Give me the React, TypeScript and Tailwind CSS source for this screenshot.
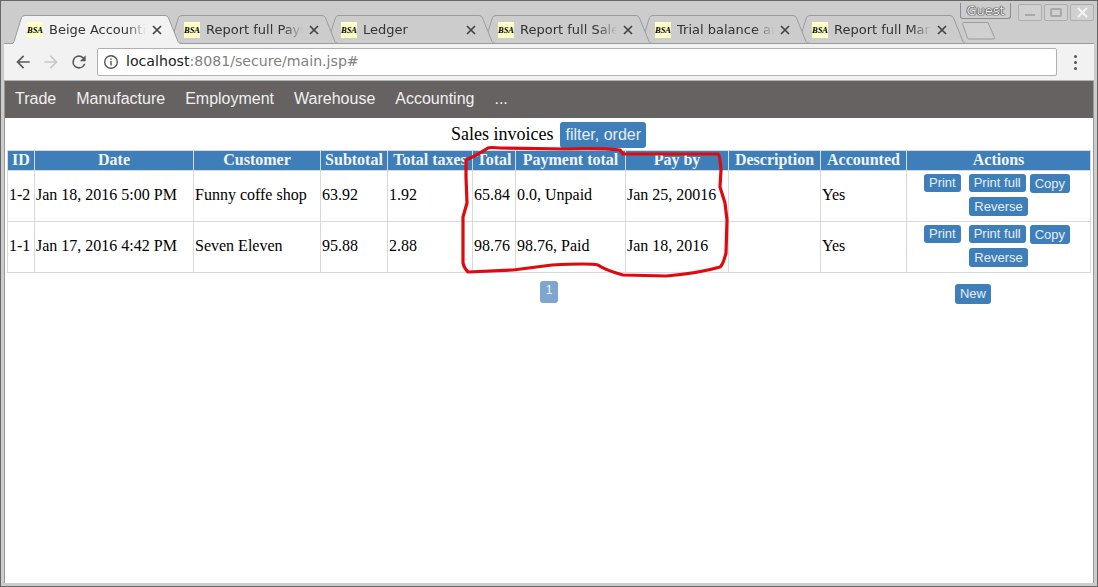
import * as React from "react";

const tabs = [
  { title: "Beige Accounting System", active: true },
  { title: "Report full Payment" },
  { title: "Ledger" },
  { title: "Report full Sales" },
  { title: "Trial balance and" },
  { title: "Report full Manuf" },
];

const columns = [
  { name: "ID", width: 27 },
  { name: "Date", width: 159 },
  { name: "Customer", width: 127 },
  { name: "Subtotal", width: 67 },
  { name: "Total taxes", width: 85 },
  { name: "Total", width: 43 },
  { name: "Payment total", width: 110 },
  { name: "Pay by", width: 103 },
  { name: "Description", width: 92 },
  { name: "Accounted", width: 86 },
  { name: "Actions", width: 184 },
];

const invoices = [
  ["1-2", "Jan 18, 2016 5:00 PM", "Funny coffe shop", "63.92", "1.92", "65.84", "0.0, Unpaid", "Jan 25, 20016", "", "Yes"],
  ["1-1", "Jan 17, 2016 4:42 PM", "Seven Eleven", "95.88", "2.88", "98.76", "98.76, Paid", "Jan 18, 2016", "", "Yes"],
];

function Favicon() {
  return (
    <span className="flex h-4 w-4 shrink-0 items-center justify-center bg-[#ffffc8] font-['Liberation_Serif',serif] text-[8.5px] font-bold italic leading-none text-black">
      BSA
    </span>
  );
}

function Tab({ title, active, index }: { title: string; active?: boolean; index: number }) {
  return (
    <div className="relative -mr-[15px] h-[29px] w-[172px] shrink-0" style={{ zIndex: active ? 20 : 10 - index }}>
      <svg className="absolute left-0 top-0" width="172" height="30" viewBox="0 0 172 30">
        <path
          d={"M0 28.5 H2 Q3.5 28.5 4 26.5 L11.5 2.5 Q12.2 0.5 15 0.5 L155 0.5 Q157.5 0.5 158.5 3 L168 26.5 Q169 28.5 172 28.5" + (active ? "" : " Z")}
          fill={active ? "#f2f2f2" : "#cccccc"}
          stroke="#9c9c9c"
        />
        {active && <rect x="3" y="28" width="166" height="2" fill="#f2f2f2" />}
      </svg>
      <div className="relative flex h-[28px] items-center pl-[17px] pt-[2px] font-['DejaVu_Sans',sans-serif] text-[13px] text-[#333]">
        <Favicon />
        <span className="ml-[6px] w-[97px] overflow-hidden whitespace-nowrap [mask-image:linear-gradient(to_right,black_80%,transparent)]">
          {title}
        </span>
        <svg className="ml-[6px]" width="10" height="10" viewBox="0 0 10 10" stroke="#444" strokeWidth="1.7">
          <path d="M1 1 L9 9 M9 1 L1 9" />
        </svg>
      </div>
    </div>
  );
}

function ActionButton({ label, className = "" }: { label: string; className?: string }) {
  return (
    <span className={`inline-block rounded-[3px] bg-[#3e7eb9] text-[13px] leading-[15px] text-[#e8eef5] ${className}`}>
      {label}
    </span>
  );
}

function WindowButton({ children }: { children: React.ReactNode }) {
  return (
    <div className="flex h-[17px] w-[24px] items-center justify-center rounded-[2px] border border-[#adadad] bg-[#d0d0d0]">
      {children}
    </div>
  );
}

export default function App() {
  return (
    <div className="relative flex h-[587px] w-[1098px] flex-col overflow-hidden border border-[#666] bg-[#cccccc] px-[3px] pb-[3px]">
      {/* tab strip */}
      <div className="relative z-10 -mx-[3px] flex h-[43px] items-start">
        <div className="flex pl-[9px] pt-[14px]">
          {tabs.map((t, i) => (
            <Tab key={t.title} title={t.title} active={t.active} index={i} />
          ))}
        </div>
        <svg className="-mr-[43px] ml-[10px] mt-[21px] shrink-0" width="33" height="18" viewBox="0 0 33 18" fill="none" stroke="#9c9c9c">
          <path d="M0.5 1.5 Q0.5 0.5 2 0.5 L26 0.5 L32.5 15.5 Q33 17 31 17 L7 17 Q6 17 5.5 16 Z" fill="#d0d0d0" />
        </svg>
        <div className="ml-auto flex items-start pr-[3px]">
          <div className="mr-[7px] mt-[2px] flex h-[16px] w-[51px] items-center justify-center rounded-b-[3px] border border-t-0 border-[#8c8c8c] font-['DejaVu_Sans',sans-serif] text-[13px] text-[#f0f0f0] [text-shadow:0_0_1px_#222,0_0_1px_#222,0_0_1px_#222]">
            Guest
          </div>
          <div className="mt-[3px] flex gap-[2px]">
            <WindowButton>
              <span className="mt-[5px] h-[2px] w-[10px] bg-[#a8a8a8]" />
            </WindowButton>
            <WindowButton>
              <span className="h-[9px] w-[12px] rounded-[2px] border-2 border-[#a8a8a8]" />
            </WindowButton>
            <WindowButton>
              <svg width="11" height="11" viewBox="0 0 11 11" stroke="#f4f4f4" strokeWidth="2">
                <path d="M1 1 L10 10 M10 1 L1 10" />
              </svg>
            </WindowButton>
          </div>
        </div>
      </div>

      {/* toolbar */}
      <div className="-mt-[1px] flex h-[38px] items-center border-b border-t border-b-[#b5b5b5] border-t-[#9c9c9c] bg-[#f2f2f2] pl-[9px] pr-[17px]">
        <svg width="20" height="20" viewBox="0 0 24 24" fill="#5a5a5a">
          <path d="M20 11H7.83l5.59-5.59L12 4l-8 8 8 8 1.41-1.41L7.83 13H20v-2z" />
        </svg>
        <svg className="ml-[8px]" width="20" height="20" viewBox="0 0 24 24" fill="#c8c8c8">
          <path d="M4 11h12.17l-5.59-5.59L12 4l8 8-8 8-1.41-1.41L16.17 13H4v-2z" />
        </svg>
        <svg className="ml-[8px]" width="20" height="20" viewBox="0 0 24 24" fill="#5a5a5a">
          <path d="M17.65 6.35A7.96 7.96 0 0 0 12 4a8 8 0 1 0 7.73 10h-2.08A6 6 0 1 1 12 6c1.66 0 3.14.69 4.22 1.78L13 11h7V4l-2.35 2.35z" />
        </svg>
        <div className="ml-[8px] flex h-[28px] flex-1 items-center rounded-[2px] border border-[#b0b0b0] bg-white pl-[5px] font-['DejaVu_Sans',sans-serif] text-[14.15px]">
          <svg width="16" height="16" viewBox="0 0 16 16" fill="none" stroke="#555" strokeWidth="1.4">
            <circle cx="8" cy="8" r="6.3" />
            <path d="M8 7 V11.5 M8 4.2 V5.8" />
          </svg>
          <span className="ml-[7px] text-[#222]">localhost</span>
          <span className="text-[#808080]">:8081/secure/main.jsp#</span>
        </div>
        <div className="ml-[17px] flex flex-col gap-[3px]">
          <span className="h-[3px] w-[3px] rounded-full bg-[#555]" />
          <span className="h-[3px] w-[3px] rounded-full bg-[#555]" />
          <span className="h-[3px] w-[3px] rounded-full bg-[#555]" />
        </div>
      </div>

      {/* page */}
      <div className="flex flex-1 flex-col border-x border-[#999] bg-white font-['Liberation_Serif',serif] text-[16px] text-black">
        <div className="flex h-[37px] items-center gap-[20px] bg-[#666261] pb-[2px] pl-[10px] font-['Liberation_Sans',sans-serif] text-[16px] text-[#f0f0f0]">
          {["Trade", "Manufacture", "Employment", "Warehouse", "Accounting", "..."].map((m) => (
            <span key={m}>{m}</span>
          ))}
        </div>

        <div className="flex h-[32px] items-center justify-center pr-[1px] pt-[2px]">
          <span className="mb-[2px] text-[18px]">Sales invoices</span>
          <span className="ml-[7px] rounded-[3px] bg-[#3e7eb9] px-[5px] py-[5px] font-['Liberation_Sans',sans-serif] text-[16px] leading-[16px] text-[#e8eef5]">
            filter, order
          </span>
        </div>

        <table className="ml-[2px] w-[1083px] table-fixed border-collapse">
          <colgroup>
            {columns.map((c) => (
              <col key={c.name} style={{ width: c.width }} />
            ))}
          </colgroup>
          <thead>
            <tr>
              {columns.map((c) => (
                <th key={c.name} className="h-[19px] whitespace-nowrap border border-[#d9d9d9] bg-[#3e7eb9] p-0 pb-[2px] text-center align-middle text-[16px] font-bold leading-[17px] text-[#f2f5f9]">
                  {c.name}
                </th>
              ))}
            </tr>
          </thead>
          <tbody>
            {invoices.map((row) => (
              <tr key={row[0]} className="h-[51px]">
                {row.map((cell, i) => (
                  <td key={i} className="overflow-visible whitespace-nowrap border border-[#d9d9d9] pb-[2px] pl-[1px] pr-0 pt-0 align-middle">
                    {cell}
                  </td>
                ))}
                <td className="border border-[#d9d9d9] p-0 pt-[2px] align-top font-['Liberation_Sans',sans-serif]">
                  <div className="flex flex-col items-center gap-[4px]">
                    <div className="mr-[3px] flex h-[20px] items-center justify-center">
                      <ActionButton label="Print" className="px-[5px] pb-[2px] pt-[1px]" />
                      <ActionButton label="Print full" className="ml-[8px] px-[5px] pb-[2px] pt-[1px]" />
                      <ActionButton label="Copy" className="ml-[4px] px-[5px] py-[2px]" />
                    </div>
                    <ActionButton label="Reverse" className="px-[5px] py-[2px]" />
                  </div>
                </td>
              </tr>
            ))}
          </tbody>
        </table>

        <div className="ml-[2px] flex w-[1083px] items-start font-['Liberation_Sans',sans-serif]">
          <div className="flex w-[900px] justify-center pl-[184px] pt-[8px]">
            <span className="rounded-[3px] bg-[#7ea6cf] px-[6px] pb-[4px] pt-[1px] text-[12px] leading-[17px] text-[#eef3f8]">1</span>
          </div>
          <div className="flex flex-1 justify-end pr-[99px] pt-[11px]">
            <ActionButton label="New" className="px-[5px] pb-[3px] pt-[2px]" />
          </div>
        </div>
      </div>

      {/* red marker scribble */}
      <svg className="pointer-events-none absolute left-[-1px] top-[-1px] z-20" width="1098" height="587" fill="none" stroke="#dd0a0f" strokeWidth="3.2" strokeLinejoin="round" strokeLinecap="round">
        <path d="M466 160 Q478 155 488 148 Q490 147 500 148 L566 149 Q600 148 620 150 L623 154 L666 154 L718 154 Q720 155 721 170 L720 187 L725 203 L727 220 L726 253 Q723 265 720 267 Q700 273 666 276 L623 275 Q605 270 598 265 Q590 263 552 265 L513 270 L468 272 Q464 268 463 263 L463 217 L467 203 L466 177 Z" />
      </svg>
    </div>
  );
}
